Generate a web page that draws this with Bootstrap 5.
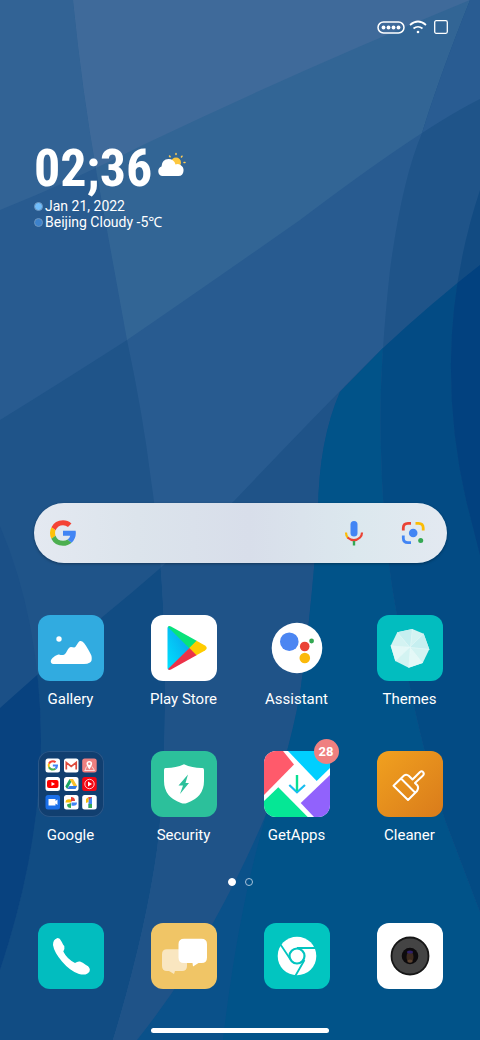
<!DOCTYPE html>
<html lang="en">
<head>
<meta charset="utf-8">
<meta name="viewport" content="width=device-width, initial-scale=1">
<title>Home screen</title>
<link href="https://cdn.jsdelivr.net/npm/bootstrap@5.3.0/dist/css/bootstrap.min.css" rel="stylesheet">
<style>
  body { font-family: Roboto, "Noto Sans", sans-serif; color: #fff; background: #1f5489; }
  svg { display: block; }
  .screen { min-height: 100vh; overflow: hidden; }
  .wallpaper { z-index: -1; }
  .status { padding: 20px 32px 0 0; gap: 4px; }
  .status-gap { margin-left: 3px; }
  .clock-widget { padding: 106px 34px 0; }
  .clock { font-family: "Roboto Condensed", "Liberation Sans Narrow", "DejaVu Sans Condensed", sans-serif; font-weight: 700; font-size: 52px; line-height: 58px; }
  .weather { margin: 12px 0 0 4px; }
  .info-line { font-size: 14px; line-height: 16px; gap: 2px; }
  .dot { width: 9px; height: 9px; border-radius: 50%; border: 1px solid #6c95bd; background: #6fbcfb; }
  .dot-dim { background: #3d82cb; }
  .search-wrap { padding: 0 33px 0 34px; margin-top: 273px; }
  .searchbar { height: 60px; border-radius: 30px; padding: 0 16px 0 15px; box-shadow: 0 1px 3px #0005;
    background: linear-gradient(90deg, #e4e9f1, #dce4ec 25%, #d8deea 52%, #dce8ee 78%, #e3e9f1); }
  .searchbar input { min-width: 0; height: 40px; outline: 0; }
  .tool { width: 28px; height: 28px; }
  .tool-lens { margin-left: 31px; margin-right: 4px; }
  .apps { padding: 0 14px; margin-top: 52px; row-gap: 42px; }
  .dock { padding: 0 14px; margin-top: 37px; }
  .app { color: #fff; font-size: 15px; line-height: 20px; gap: 8px; text-decoration: none; }
  .tile { width: 66px; height: 66px; }
  .tile > svg { border-radius: 12px; }
  .folder { background: #113f70; border-radius: 12px; box-shadow: inset 0 0 0 1px #2a5788; }
  .count { width: 25px; height: 25px; right: -9px; top: -12px; border-radius: 50%; background: #ef8080; font-size: 13px; line-height: 25px; font-weight: 700; text-align: center; }
  .pager { margin-top: 33px; gap: 9px; }
  .page-on, .page-off { width: 8px; height: 8px; border-radius: 50%; border: 1px solid #a9c3da; }
  .page-on { background: #fff; border-color: #fff; }
  .home-pill { width: 37%; height: 5px; border-radius: 3px; margin: 39px auto 7px; background: #fff; }
</style>
</head>
<body>
<main class="screen position-relative d-flex flex-column">
  <svg class="wallpaper position-absolute top-0 start-0 w-100 h-100" viewBox="0 0 480 1040" preserveAspectRatio="none" aria-hidden="true">
    <defs>
      <path id="bandTop" d="M0 0H480V99Q420 129 300 220Q200 290 127 340Q60 383 0 420Z"/>
      <path id="bandSky" d="M0 0H470Q300 70 145 144Q70 182 0 210Z"/>
      <path id="bandLow" d="M480 265Q430 304 383 348Q330 400 235 500Q170 562 100 619Q45 668 0 708V1040H480Z"/>
      <clipPath id="midStrip"><path d="M73 0Q82 90 97 175L127 340Q143 415 151 480Q163 560 165 660Q166 780 157 850Q145 935 113 1040H480V0Z"/></clipPath>
      <clipPath id="rightStrip"><path d="M470 0Q440 75 422 133Q402 180 390 270Q378 380 381 450Q383 540 396 610Q415 730 445 820L480 912V0Z"/></clipPath>
      <clipPath id="edgeStrip"><path d="M480 190Q452 275 451 360Q450 430 466 500L480 555Z"/></clipPath>
      <clipPath id="leftStrip"><path d="M0 526Q40 620 41 740Q40 850 0 970Z"/></clipPath>
    </defs>
    <rect width="480" height="1040" fill="#1f5489"/>
    <use href="#bandTop" fill="#285b90"/><use href="#bandSky" fill="#326395"/><use href="#bandLow" fill="#114c83"/>
    <g clip-path="url(#leftStrip)"><rect width="480" height="1040" fill="#1b5087"/><use href="#bandLow" fill="#08427f"/></g>
    <g clip-path="url(#midStrip)"><rect width="480" height="1040" fill="#285b90"/><use href="#bandTop" fill="#326595"/><use href="#bandSky" fill="#3f6a9a"/><use href="#bandLow" fill="#1f5388"/></g>
    <path d="M340 392Q319 440 318 510Q314 590 300 694Q289 755 267 812Q245 865 213 923Q185 980 137 1040H480V265Q420 310 383 348Z" fill="#0a518a"/>
    <path d="M340 392Q319 440 318 510Q314 590 300 694Q289 755 267 812Q238 910 223 1040H480V265Q420 310 383 348Z" fill="#015389"/>
    <g clip-path="url(#rightStrip)"><rect width="480" height="1040" fill="#1f5489"/><use href="#bandTop" fill="#295c92"/><use href="#bandLow" fill="#034b84"/></g>
    <g clip-path="url(#edgeStrip)"><rect width="480" height="1040" fill="#124b82"/><use href="#bandLow" fill="#02417f"/></g>
  </svg>

  <header class="status d-flex justify-content-end align-items-center">
    <svg width="28" height="14" viewBox="0 0 28 14" role="img" aria-label="Battery"><rect x="1" y="2" width="26" height="11" rx="5.500" fill="none" stroke="#fff" stroke-width="1.500"/><g fill="#fff"><circle cx="6.500" cy="7.500" r="1.900"/><circle cx="11.500" cy="7.500" r="1.900"/><circle cx="16.500" cy="7.500" r="1.900"/><circle cx="21.500" cy="7.500" r="1.900"/></g></svg>
    <svg width="18" height="14" viewBox="0 0 18 14" role="img" aria-label="Wi-Fi"><path d="M1 5Q9-2 17 5M4.500 8.500Q9 5 13.500 8.500" fill="none" stroke="#fff" stroke-width="1.700"/><circle cx="9" cy="12" r="1.300" fill="#fff"/></svg>
    <svg class="status-gap" width="14" height="14" viewBox="0 0 14 14" aria-hidden="true"><rect x=".7" y=".7" width="12.600" height="12.600" rx="1.500" fill="none" stroke="#fff" stroke-width="1.300"/></svg>
  </header>

  <section class="clock-widget">
    <div class="d-flex align-items-start">
      <time class="clock">02;36</time>
      <svg class="weather" width="32" height="28" viewBox="0 0 32 28" role="img" aria-label="Cloudy"><g stroke="#fc5" stroke-width="1.500" stroke-linecap="round"><path d="M13.500 4l.6.800M20 1.500v1M26 4.200l-.6.800M29 10.500h-1"/></g><circle cx="20" cy="10.500" r="5" fill="#fdc73e"/><path d="M6 24a5 5 0 0 1-.5-9.500Q6 7 12.500 7Q18 7 19.500 12.500Q22 11.500 24.500 13Q28 15 27.500 19Q27 24 22.500 24Z" fill="#fff"/></svg>
    </div>
    <div class="info-line d-flex align-items-center"><span class="dot"></span>Jan 21, 2022</div>
    <div class="info-line d-flex align-items-center"><span class="dot dot-dim"></span>Beijing Cloudy -5℃</div>
  </section>

  <form class="search-wrap" role="search">
    <div class="searchbar d-flex align-items-center">
      <svg width="28" height="28" viewBox="0 0 48 48" role="img" aria-label="Google"><g id="gmark"><path fill="#f44336" d="M4.200 14Q10 2 24 2q8.500 0 14.500 5.700l-6 6Q29 10.500 24 10.500q-9 0-12.800 8.800Z"/><path fill="#ffc107" d="M4.200 14A23 23 0 0 0 4 34l7.200-5.500q-1.600-4.500 0-9.200Z"/><path fill="#4caf50" d="M4 34q6 12 20 12 8.500 0 14.700-5.300L31.800 35.200q-3.300 2.200-7.800 2.200-9.300 0-12.800-8.900Z"/><path fill="#4285f4" d="M24 20v8.800h12.400q-.9 4-4.600 6.400l6.900 5.500Q46 34 46 24.500q0-2.300-.4-4.500Z"/></g></svg>
      <input type="search" aria-label="Search" class="flex-grow-1 border-0 bg-transparent">
      <button type="button" class="tool btn p-0 border-0" aria-label="Voice search"><svg width="28" height="28" viewBox="0 0 28 28"><rect x="10.500" y="2" width="7" height="15.500" rx="3.500" fill="#4285f4"/><path d="M6 13.500Q6 17 8 19" stroke="#fbbc04" stroke-width="2.200" fill="none"/><path d="M7.500 18.500Q14 24 20 18.500Q22 16.500 22 13.500" stroke="#ea4335" stroke-width="2.200" fill="none"/><path d="M14 22v4.500" stroke="#34a853" stroke-width="2.400"/></svg></button>
      <button type="button" class="tool tool-lens btn p-0 border-0" aria-label="Lens"><svg width="28" height="28" viewBox="0 0 28 28"><g fill="none" stroke-width="2.800"><path stroke="#ea4335" d="M4.300 11.500V9q0-4.700 4.700-4.700h3"/><path stroke="#fbbc04" d="M16.500 4.300h3q4.700 0 4.700 4.700v2.500"/><path stroke="#4285f4" d="M4.300 16.500V19q0 4.700 4.700 4.700h3"/></g><circle cx="14.200" cy="14" r="4.300" fill="#4285f4"/><circle cx="21.700" cy="21.500" r="2.500" fill="#34a853"/></svg></button>
    </div>
  </form>

  <nav class="apps row g-0" aria-label="Apps">
    <a href="#" class="app col-3 d-flex flex-column align-items-center"><span class="tile"><svg viewBox="0 0 66 66"><rect width="66" height="66" fill="#31abe0"/><circle cx="21" cy="24" r="2.700" fill="#fff"/><path fill="#fff" d="M15 49q-3-1-2-4 1-2 4-4t4-1.500 4 .5q2 0 4-4t4-4 3 .5 3-3 3-3.500q2-.5 4 2t4.500 7 3 6q1 5-1.500 6.500T46 49Z"/></svg></span><span>Gallery</span></a>
    <a href="#" class="app col-3 d-flex flex-column align-items-center"><span class="tile"><svg viewBox="0 0 66 66"><defs><linearGradient id="playBlue" x1="1" x2="0" y2="1"><stop stop-color="#0b9be8"/><stop offset="1" stop-color="#00e2ff"/></linearGradient></defs><rect width="66" height="66" fill="#fff"/><path fill="url(#playBlue)" d="M18 11.500L39 33 18 54.500Q16.500 55 16.500 53V13Q16.500 11 18 11.500Z"/><path fill="#08e27a" d="M17 12Q18 10.500 20 11.500L46 26 38.500 33.500Z"/><path fill="#fc0" d="M45.500 25.700L54 30.500Q57.500 33 54 35.500L45 40.500 38 33.300Z"/><path fill="#ec3248" d="M38.500 33L45.500 40.200 20 54.500Q18 55.500 17 54Z"/></svg></span><span>Play Store</span></a>
    <a href="#" class="app col-3 d-flex flex-column align-items-center"><span class="tile"><svg viewBox="0 0 66 66"><circle cx="33" cy="33" r="25.300" fill="#fff"/><circle cx="25.300" cy="26.700" r="9.300" fill="#4c86f2"/><circle cx="40.700" cy="31.500" r="4.800" fill="#ea4335"/><circle cx="47.600" cy="26" r="2.400" fill="#34a853"/><circle cx="40.800" cy="43" r="5.300" fill="#fbb90a"/></svg></span><span>Assistant</span></a>
    <a href="#" class="app col-3 d-flex flex-column align-items-center"><span class="tile"><svg viewBox="0 0 66 66"><rect width="66" height="66" fill="#02bdbf"/><path fill="#d3f3f2" d="M35.300 14L46.700 18.700 52.300 34.300 45.700 48 31.700 52.700 18.300 46 13.700 30.700 20.300 17.300Z"/><path fill="#c6eff0" d="M35.300 14L33 32 20.300 17.300ZM52.300 34.300L33 32 46.700 18.700Z"/><path fill="#e4f8f7" d="M33 32L45.700 48 31.700 52.700ZM33 32L18.300 46 13.700 30.700Z"/><path stroke="#e6f8f8" stroke-width=".5" d="M35.300 14L31.700 52.700M46.700 18.700L18.300 46M52.300 34.300L13.700 30.700M45.700 48L20.300 17.300"/></svg></span><span>Themes</span></a>

    <a href="#" class="app col-3 d-flex flex-column align-items-center"><span class="tile folder"><svg viewBox="0 0 66 66">
      <g fill="#fff"><rect x="7.500" y="7.500" width="14.500" height="14" rx="2.500"/><rect x="26" y="7.500" width="14.500" height="14" rx="2.500"/><rect x="7.500" y="26" width="14.500" height="14" rx="2.500"/><rect x="26" y="26" width="14.500" height="14" rx="2.500"/><rect x="26" y="44" width="14.500" height="14.500" rx="2.500"/><rect x="44.200" y="44" width="14.500" height="14.500" rx="2.500"/></g>
      <rect x="44.200" y="7.500" width="14.500" height="14" rx="2.500" fill="#ef8080"/><rect x="44.200" y="26" width="14.500" height="14" rx="2.500" fill="#f40612"/><rect x="7.500" y="44" width="14.500" height="14.500" rx="2.500" fill="#1a6fe8"/>
      <use href="#gmark" transform="translate(9.200 8.700) scale(.235)"/>
      <path d="M28.300 18.500V11.500L33.200 15.500 38.200 11.500V18.500" fill="none" stroke="#dd4b3e" stroke-width="1.700"/>
      <path d="M47 19.500L48.500 15.500M46.500 19.500h10L54 15.500" fill="none" stroke="#fff" stroke-width=".7"/><path d="M51.300 18.500Q48.500 14.500 48.500 12.800a2.800 2.800 0 0 1 5.600 0Q54.100 14.500 51.300 18.500Z" fill="#fff"/><circle cx="51.300" cy="12.800" r="1.200" fill="#ef8080"/>
      <rect x="9" y="29" width="11.500" height="8" rx="2" fill="#f00"/><path d="M13.500 31v4l3.500-2z" fill="#fff"/>
      <path fill="#18a562" d="M31.500 28L27.300 35.500 29.200 38 33.500 30.500Z"/><path fill="#fbc02d" d="M31.500 28H35L39.200 35H35.500Z"/><path fill="#3779e3" d="M31.500 35H39.200L37.500 38H29.200Z"/>
      <circle cx="51.500" cy="33" r="4.700" fill="none" stroke="#fff" stroke-width=".8"/><path d="M50 30.500v5l4-2.500z" fill="#fff"/>
      <path fill="#fff" d="M10.500 48h7v2l2-1.500v5.500l-2-1.500v2h-7z"/>
      <path fill="#ea4335" d="M33 51V46a3 3 0 0 1 0 5Z"/><path fill="#ea4335" d="M33 46q4 0 4 4h-4Z"/><path fill="#4285f4" d="M33.500 51.500H39q0 4-5.500 3Z"/><path fill="#34a853" d="M33 52v5q-4 0-4-3.500Z"/><path fill="#fbbc04" d="M33 51.500h-5.500q0-4 5.500-3Z"/>
      <path fill="#4285f4" d="M50.500 46H54V57H50.500Z"/><path fill="#fbbc04" d="M50.500 46V51L48 52V48Z"/><path fill="#34a853" d="M50.500 53H54V57H50.500Z"/><path fill="#ea4335" d="M50.500 46H54L51 49Z"/>
    </svg></span><span>Google</span></a>
    <a href="#" class="app col-3 d-flex flex-column align-items-center"><span class="tile"><svg viewBox="0 0 66 66"><rect width="66" height="66" fill="#2cc09b"/><path fill="#fff" d="M33 13.300Q42 17.300 51.500 17Q53 17 53 19V30Q53 46 36 52Q33 53 30 52Q13 46 13 30V19Q13 17 14.500 17Q24 17.300 33 13.300Z"/><path fill="#2cc09b" d="M37 23.500L27.500 34.500H32L29 43 38 32H34.500Z"/></svg></span><span>Security</span></a>
    <a href="#" class="app col-3 d-flex flex-column align-items-center"><span class="tile position-relative"><svg viewBox="0 0 66 66"><rect width="66" height="66" fill="#fff"/><path fill="#ff5a6b" d="M0 0H19L30 13.500 0 44Z"/><path fill="#00cfff" d="M24 0H66V17L52.700 30Z"/><path fill="#9162fc" d="M66 24L36.700 52 50 66H66Z"/><path fill="#05e795" d="M0 50L14.300 36.300 43.700 66H0Z"/><path fill="none" stroke="#16bdf0" stroke-width="2.200" d="M25.300 34L33 41.300 41 34"/><path stroke="#08df91" stroke-width="2.400" d="M33 24V40"/></svg><span class="count position-absolute">28</span></span><span>GetApps</span></a>
    <a href="#" class="app col-3 d-flex flex-column align-items-center"><span class="tile"><svg viewBox="0 0 66 66"><defs><linearGradient id="amber" x2="1" y2="1"><stop stop-color="#f1a11f"/><stop offset="1" stop-color="#d97b1b"/></linearGradient></defs><rect width="66" height="66" fill="url(#amber)"/><path fill="none" stroke="#fff" stroke-width="2" stroke-linejoin="round" d="M16.500 34.700L27 24.500Q29.500 22.800 32 25L35.500 28.500 43 21Q45 19.500 46.300 21.300T45.500 25L38 32 40.500 34.500Q42 37 40 40L31 49ZM24 27.500L38 41.500"/></svg></span><span>Cleaner</span></a>
  </nav>

  <div class="pager d-flex justify-content-center" role="group" aria-label="Page 1 of 2"><span class="page-on"></span><span class="page-off"></span></div>

  <nav class="dock row g-0" aria-label="Dock">
    <a href="#" class="app col-3 d-flex flex-column align-items-center" aria-label="Phone"><span class="tile"><svg viewBox="0 0 66 66"><rect width="66" height="66" fill="#02bdbf"/><path fill="#fff" d="M19 15.200Q21.500 14.500 23.500 18.500T26.300 23Q27 26 25.300 28.500 29 36 37 40Q39.500 38 42 38.500T48 42Q53 44.500 51.500 48.500 49 53 41 51Q32 48 24 38.500T15 22Q15 16.500 19 15.200Z"/></svg></span></a>
    <a href="#" class="app col-3 d-flex flex-column align-items-center" aria-label="Messages"><span class="tile"><svg viewBox="0 0 66 66"><rect width="66" height="66" fill="#f0c566"/><path fill="#f9e6c0" d="M16 26.300H31q5 0 5 5V43q0 5-5 5H24L23 51 18 48H16q-5 0-5-5V31.300q0-5 5-5Z"/><path fill="#fff" d="M33 15.700H50.500q5.500 0 5.500 5.500V34.500q0 5.500-5.500 5.500H47.500L42 43.500 41.500 40H33q-5.500 0-5.500-5.500V21.200q0-5.500 5.500-5.500Z"/></svg></span></a>
    <a href="#" class="app col-3 d-flex flex-column align-items-center" aria-label="Chrome"><span class="tile"><svg viewBox="0 0 66 66"><rect width="66" height="66" fill="#02c5c0"/><circle cx="33" cy="33" r="19.300" fill="#fff"/><circle cx="33" cy="33" r="7.500" fill="#fff" stroke="#02c5c0" stroke-width="2.200"/><path fill="none" stroke="#02c5c0" stroke-width="1.800" d="M53 25H33M16.500 21.500L25.500 35M31 53.500L40.500 37"/></svg></span></a>
    <a href="#" class="app col-3 d-flex flex-column align-items-center" aria-label="Camera"><span class="tile"><svg viewBox="0 0 66 66"><rect width="66" height="66" fill="#fff"/><circle cx="33" cy="33" r="18.500" fill="#444" stroke="#161616" stroke-width="1.800"/><circle cx="33" cy="33" r="8.300" fill="#0d0b0d"/><ellipse cx="33" cy="34" rx="3.500" ry="6" fill="#3c2b20"/><ellipse cx="33" cy="29" rx="3" ry="1.600" fill="#30206a"/><ellipse cx="33" cy="38" rx="2.600" ry="1.600" fill="#5c4330"/></svg></span></a>
  </nav>
  <div class="home-pill"></div>
</main>
<script src="https://cdn.jsdelivr.net/npm/bootstrap@5.3.0/dist/js/bootstrap.bundle.min.js"></script>
</body>
</html>
